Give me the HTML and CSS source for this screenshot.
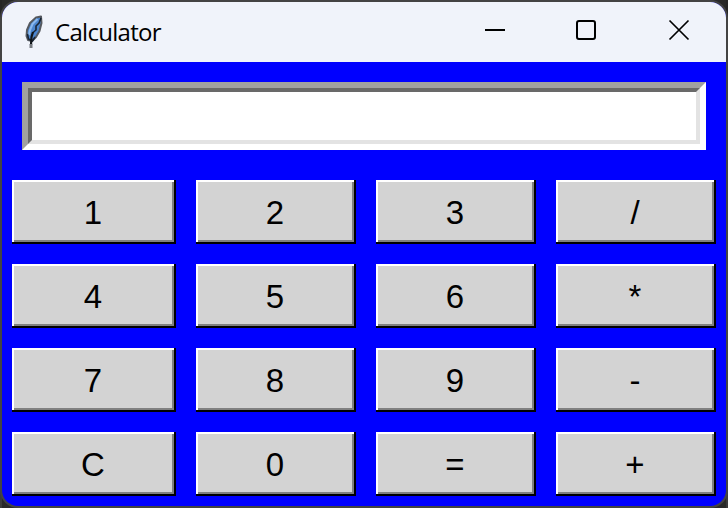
FILE: index.html
```html
<!DOCTYPE html>
<html lang="en">
<head>
<meta charset="utf-8">
<title>Calculator</title>
<link rel="stylesheet" href="styles.css">
</head>
<body>
<main class="window">
  <header class="titlebar">
    <svg class="feather" width="20" height="34" viewBox="0 0 20 34">
      <path d="M12 2.500 L17 1.500 L17.500 8 L15.500 16 L12 22 L8 26 L4 25 L2.500 21 L3 15 L6 8Z" fill="#4c86cf" stroke="#55595f" stroke-width="2" stroke-linejoin="round"/>
      <path d="M13.500 4 L8.500 9 L6 15 L5 20" fill="none" stroke="#8bb9ee" stroke-width="2"/>
      <path d="M17 3 L15 8 L12 11 L12 15 L8.500 18 M3.500 19 L4.500 24 L8.500 26 L11 22" fill="none" stroke="#182536" stroke-width="1.600"/>
      <path d="M9 17 L7.500 22 L7 30" fill="none" stroke="#101418" stroke-width="2.200"/>
      <path d="M7 29 V33" fill="none" stroke="#777b80" stroke-width="3"/>
    </svg>
    <h1 class="title">Calculator</h1>
    <div class="controls">
      <svg class="control" width="22" height="22" viewBox="0 0 22 22"><path d="M1 11H21" stroke="#000" stroke-width="2"/></svg>
      <svg class="control" width="22" height="22" viewBox="0 0 22 22"><rect x="2" y="2" width="18" height="18" rx="2" fill="none" stroke="#000" stroke-width="2"/></svg>
      <svg class="control" width="22" height="22" viewBox="0 0 22 22"><path d="M1.500 1.500L20.500 20.500M20.500 1.500L1.500 20.500" stroke="#000" stroke-width="1.700"/></svg>
    </div>
  </header>
  <div class="entry"><div class="field"></div></div>
  <div class="keys">
    <button class="key">1</button><button class="key">2</button><button class="key">3</button><button class="key">/</button>
    <button class="key">4</button><button class="key">5</button><button class="key">6</button><button class="key">*</button>
    <button class="key">7</button><button class="key">8</button><button class="key">9</button><button class="key">-</button>
    <button class="key">C</button><button class="key">0</button><button class="key">=</button><button class="key">+</button>
  </div>
</main>
</body>
</html>
```

FILE: styles.css
```css
* { box-sizing: border-box; }
body {
  margin: 0;
  width: 728px;
  height: 508px;
  padding: 2px;
  overflow: hidden;
  background: linear-gradient(#252525 0 48px, #9a9a9a 50px 76px, #3b3b3b 78px) 0 0 / 2px 100% no-repeat,
    linear-gradient(#252525 0 48px, #a06055 50px 60px, #3b3b3b 62px) 100% 0 / 2px 100% no-repeat,
    #292929;
}
.window {
  width: 724px;
  height: 504px;
  background: #0000ff;
  border-radius: 16px;
  box-shadow: 0 0 0 2px #434343;
  overflow: hidden;
}
.titlebar {
  display: flex;
  align-items: center;
  height: 60px;
  padding: 0 36px 4px 22px;
  background: #f0f3fa;
}
.feather { margin-top: 3px; }
.title {
  margin: 3px 0 0 11px;
  font: 400 24px/32px "Open Sans", "Noto Sans", sans-serif;
  letter-spacing: -0.7px;
  color: #000;
}
.controls { display: flex; margin-left: auto; }
.control { display: block; margin-left: 69px; }
.control:last-child { margin-left: 71px; }
.entry {
  margin: 20px 20px 0;
  height: 68px;
  border: 6px solid;
  border-color: #a0a0a0 #fff #fff #a0a0a0;
}
.field {
  height: 56px;
  border: 4px solid;
  border-color: #696969 #e3e3e3 #e3e3e3 #696969;
  background: #fff;
}
.keys {
  display: grid;
  grid-template-columns: 164px 160px 160px 160px;
  grid-auto-rows: 64px;
  gap: 20px;
  margin: 30px 10px 0;
}
.key {
  padding: 1px 2px 0 0;
  border: 0;
  border-radius: 0;
  background: #d3d3d3;
  box-shadow: inset -2px -2px #000, inset 2px 2px #fff, inset -4px -4px #808080;
  font: 33px/64px "Liberation Sans", Arial, sans-serif;
  color: #000;
}
```
